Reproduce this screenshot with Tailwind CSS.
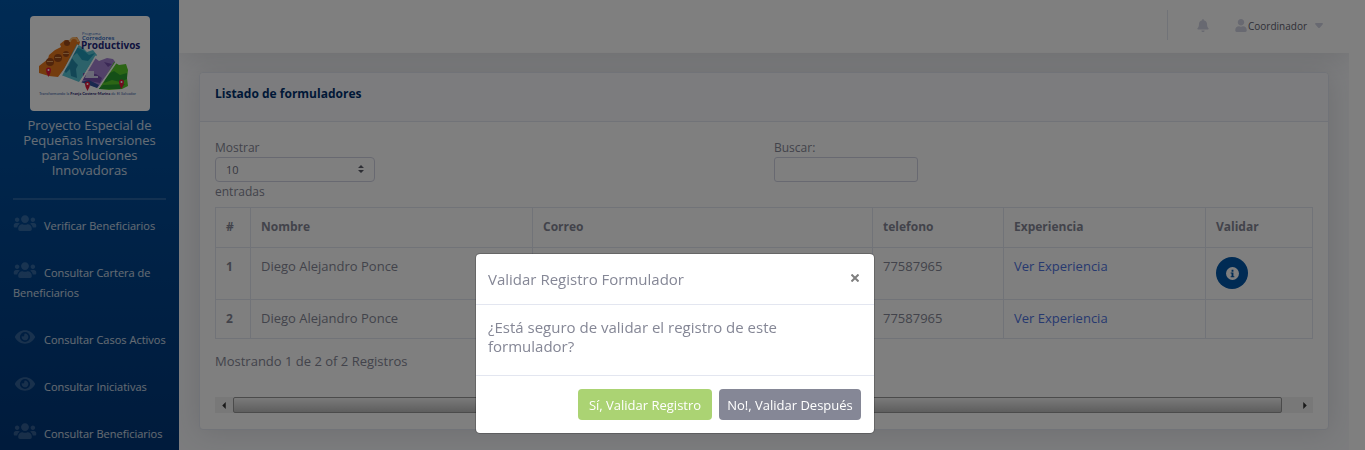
<!DOCTYPE html>
<html lang="es">
<head>
<meta charset="utf-8">
<meta name="viewport" content="width=device-width, initial-scale=1">
<title>Listado de formuladores</title>
<script src="https://cdn.jsdelivr.net/npm/@tailwindcss/browser@4"></script>
</head>
<body class="h-screen overflow-hidden bg-white pr-4 font-['Open_Sans','Noto_Sans',sans-serif] text-[12px] text-[#858796]">
<svg class="hidden">
  <symbol id="users" viewBox="0 0 640 512"><path d="M96 224c35.300 0 64-28.700 64-64s-28.700-64-64-64-64 28.700-64 64 28.700 64 64 64zm448 0c35.300 0 64-28.700 64-64s-28.700-64-64-64-64 28.700-64 64 28.700 64 64 64zm32 32h-64c-17.600 0-33.500 7.100-45.100 18.600 40.300 22.100 68.900 62 75.100 109.400h66c17.700 0 32-14.300 32-32v-32c0-35.300-28.700-64-64-64zm-256 0c61.900 0 112-50.100 112-112S381.900 32 320 32 208 82.100 208 144s50.100 112 112 112zm76.800 32h-8.300c-20.800 10-43.900 16-68.500 16s-47.600-6-68.500-16h-8.300C179.600 288 128 339.600 128 403.200V432c0 26.500 21.500 48 48 48h288c26.500 0 48-21.500 48-48v-28.800c0-63.600-51.600-115.200-115.200-115.200zm-223.700-13.400C161.500 263.100 145.600 256 128 256H64c-35.300 0-64 28.700-64 64v32c0 17.700 14.300 32 32 32h65.900c6.300-47.400 34.900-87.300 75.200-109.400z"/></symbol>
  <symbol id="eye" viewBox="0 0 576 512"><path d="M572.520 241.400C518.290 135.590 410.930 64 288 64S57.680 135.640 3.480 241.410a32.350 32.350 0 0 0 0 29.190C57.710 376.410 165.070 448 288 448s230.320-71.640 284.520-177.410a32.350 32.350 0 0 0 0-29.190zM288 400a144 144 0 1 1 144-144 143.930 143.930 0 0 1-144 144zm0-240a95.310 95.310 0 0 0-25.310 3.790 47.850 47.850 0 0 1-66.900 66.900A95.780 95.780 0 1 0 288 160z"/></symbol>
</svg>

<div class="flex h-full">
  <aside class="w-[179px] shrink-0 bg-linear-to-b from-[#0056a8] to-[#003678] px-[13px] pt-4 text-white/80">
    <div class="mx-auto w-[120px] rounded bg-white">
      <svg viewBox="0 0 120 95" class="block h-[95px] w-full" role="img" aria-label="Programa Corredores Productivos">
        <path fill="#e8781c" d="M9 50l9-7 1-4 6-5 6-3-1-3 5-4 5 1 3-3 4-1 3 5-3 10-19 25-9-1-10-3z"/>
        <path fill="#59c4d4" d="M47 28l5 3 5 5 6-2 4 5-18 27-18-7z"/>
        <path fill="#209bb8" d="M46 31l7 3 6 5 6-2-7 8-6-1-5-7-7 5z"/>
        <path fill="#278dad" d="M42 42l3 4 3 3-2 4 1 9-6-2-1-7-4 4-2-2 5-6z"/>
        <path fill="#a583d3" d="M65 42l4 3 8-3 6 1 3 4-18 25-17-6z"/>
        <path fill="#7651ad" d="M53 57l13 1 6 4-2 5-17-3zM74 46l8 2-4 3z"/>
        <path fill="#334f9d" d="M51 66l8-2 10 5-2 3z"/>
        <path fill="#d5d2ee" d="M57 55h7v5h4v2H55z"/>
        <path fill="#58cb2a" d="M84 46l5 3 7-1 2 6-1 8 1 8-6 3-13 1-10-1z"/>
        <path fill="#289e2f" d="M76 59l8-4 6 4 7-2v6l-7 3-8-2-8 3zM73 69l22-1-5 5H68z"/>
        <g fill="#a04a18"><circle cx="20" cy="46" r="4"/><circle cx="28" cy="42" r="4"/><circle cx="36" cy="38" r="3"/><circle cx="37" cy="27" r="3"/></g>
        <g fill="#e8a060"><path d="M17 45h6v1h-6zM25 41h6v1h-6zM33 37h6v1h-6z"/></g>
        <path stroke="#fff" stroke-width="1.500" d="M48 29L31 60M66 40L50 67M87 45L67 74"/>
        <path d="M40 26a4 4 0 0 1 8 0" stroke="#f6b56c" fill="none" stroke-width="2"/>
        <g fill="#e5163d"><path d="M16 54a2.500 2.500 0 0 1 5 0q0 3-2.500 7q-2.500-4-2.500-7zM55 68a2.500 2.500 0 0 1 5 0q0 3-2.500 7q-2.500-4-2.500-7zM89 66a2.500 2.500 0 0 1 5 0q0 3-2.500 7q-2.500-4-2.500-7z"/></g>
        <g fill="#fff"><circle cx="18.500" cy="54" r="1"/><circle cx="57.500" cy="68" r="1"/><circle cx="91.500" cy="66" r="1"/></g>
        <g font-family="Open Sans, sans-serif">
          <text x="52" y="19" font-size="4" fill="#2b62b5">Programa</text>
          <text x="52" y="24" font-size="6" font-weight="600" fill="#1d5fc0">Corredores</text>
          <text x="51" y="33" font-size="10" font-weight="700" fill="#23277d">Productivos</text>
          <text x="9" y="79" font-family="Lato, sans-serif" font-size="4" fill="#3b62a5">Transformando la <tspan font-weight="700" fill="#1d2170">Franja Costero-Marina</tspan> de El Salvador</text>
        </g>
      </svg>
    </div>
    <p class="mt-[7px] px-2 text-center text-[13px] leading-[15px]">Proyecto Especial de Pequeñas Inversiones para Soluciones Innovadoras</p>
    <hr class="mt-5 h-[2px] border-0 bg-white/15">
    <nav class="-mr-3 mt-[3px] text-[11px] leading-5">
      <a href="#" class="block pb-[14px] pt-[13px]"><svg class="-my-1 mr-[7px] inline-block h-[18px] w-6 fill-white/20 align-[2px]"><use href="#users"/></svg>Verificar Beneficiarios</a>
      <a href="#" class="block pb-[14px] pt-[13px]"><svg class="-my-1 mr-[7px] inline-block h-[18px] w-6 fill-white/20 align-[2px]"><use href="#users"/></svg>Consultar Cartera de<br>Beneficiarios</a>
      <a href="#" class="block pb-[14px] pt-[13px]"><svg class="-my-1 mr-[7px] inline-block h-[18px] w-6 fill-white/20 align-[2px]"><use href="#eye"/></svg>Consultar Casos Activos</a>
      <a href="#" class="block pb-[14px] pt-[13px]"><svg class="-my-1 mr-[7px] inline-block h-[18px] w-6 fill-white/20 align-[2px]"><use href="#eye"/></svg>Consultar Iniciativas</a>
      <a href="#" class="block pb-[14px] pt-[13px]"><svg class="-my-1 mr-[7px] inline-block h-[18px] w-6 fill-white/20 align-[2px]"><use href="#users"/></svg>Consultar Beneficiarios</a>
    </nav>
  </aside>

  <div class="flex min-w-0 flex-1 flex-col overflow-hidden bg-[#f8f9fc]">
    <header class="flex h-[53px] shrink-0 items-center justify-end bg-white pr-[26px] shadow-[0_2px_28px_rgba(58,59,69,0.15)]">
      <div class="mb-[3px] h-[30px] w-px bg-[#e3e6f0]"></div>
      <button type="button" aria-label="Notificaciones" class="mb-[2px] ml-[29px]"><svg viewBox="0 0 448 512" class="h-[13px] w-3 fill-[#d1d3e2]"><path d="M224 512c35.320 0 63.970-28.650 63.970-64H160.030c0 35.350 28.650 64 63.970 64zm215.390-149.710c-19.320-20.760-55.470-51.990-55.470-154.290 0-77.700-54.480-139.900-127.940-155.160V32c0-17.670-14.320-32-31.980-32s-31.980 14.330-31.980 32v20.840C118.560 68.100 64.080 130.300 64.080 208c0 102.300-36.150 133.530-55.470 154.290-6 6.450-8.660 14.160-8.610 21.710.11 16.400 12.980 32 32.100 32h383.800c19.120 0 32-15.600 32.100-32 .05-7.550-2.610-15.270-8.610-21.710z"/></svg></button>
      <button type="button" class="mb-[2px] ml-[26px] flex items-center text-[10px] leading-4 text-[#60616f]"><svg viewBox="0 0 448 512" class="mr-px h-[13px] w-3 fill-[#d1d3e2]"><path d="M224 256c70.700 0 128-57.300 128-128S294.700 0 224 0 96 57.300 96 128s57.300 128 128 128zm89.600 32h-16.700c-22.200 10.200-46.900 16-72.900 16s-50.600-5.800-72.900-16h-16.700C60.200 288 0 348.200 0 422.400V464c0 26.500 21.500 48 48 48h352c26.500 0 48-21.500 48-48v-41.600c0-74.200-60.200-134.400-134.400-134.400z"/></svg>Coordinador<svg viewBox="0 0 8 5" class="ml-2 h-[5px] w-2 fill-[#d1d3e2]"><path d="M0 1Q0 0 1 0h6q1 0 1 1L5 4.500q-1 1-2 0z"/></svg></button>
    </header>

    <main class="px-5 pt-[19px]">
      <section class="rounded border border-[#e3e6f0] bg-white shadow-[0_2px_28px_rgba(58,59,69,0.15)]">
        <div class="rounded-t border-b border-[#e3e6f0] bg-[#f8f9fc] px-[15px] pb-[17px] pt-[11px]">
          <h1 class="text-[12px] font-bold leading-5 text-[#00316f]">Listado de formuladores</h1>
        </div>
        <div class="px-[15px] pb-4 pt-4">
          <div class="flex leading-[19px]">
            <div class="w-[559px] shrink">
              <label for="cantidad" class="block">Mostrar</label>
              <div class="relative w-40">
                <select id="cantidad" class="block h-[25px] w-full appearance-none rounded border border-[#d1d3e2] bg-white px-[10px] text-[11px] text-[#6e707e]"><option>10</option></select>
                <svg viewBox="0 0 6 8" class="pointer-events-none absolute right-[11px] top-2 h-2 w-[6px] fill-[#5a5c69]"><path d="M3 0l3 3H0zM0 5h6L3 8z"/></svg>
              </div>
              <span class="block">entradas</span>
            </div>
            <div>
              <label for="buscar" class="block">Buscar:</label>
              <input id="buscar" type="search" class="block h-[25px] w-36 rounded-[3px] border border-[#d1d3e2] bg-white px-2">
            </div>
          </div>
          <table class="mt-[6px] w-full table-fixed border-collapse text-left leading-[18px] [&_td]:border [&_td]:border-[#e3e6f0] [&_td]:px-[10px] [&_td]:pb-[10px] [&_td]:pt-[9px] [&_td]:align-top [&_td]:text-[13px] [&_th]:border [&_th]:border-[#e3e6f0] [&_th]:px-[10px] [&_th]:pb-[9px] [&_th]:pt-[10px] [&_th]:align-top">
            <colgroup><col class="w-[35px]"><col class="w-[282px]"><col><col class="w-[131px]"><col class="w-[202px]"><col class="w-[107px]"></colgroup>
            <thead><tr class="h-10"><th scope="col">#</th><th scope="col">Nombre</th><th scope="col">Correo</th><th scope="col">telefono</th><th scope="col">Experiencia</th><th scope="col">Validar</th></tr></thead>
            <tbody>
              <tr class="h-[52px]"><th scope="row">1</th><td>Diego Alejandro Ponce</td><td></td><td>77587965</td><td><a href="#" class="text-[#4e73df]">Ver Experiencia</a></td>
                <td><button type="button" aria-label="Información" class="flex size-8 items-center justify-center rounded-full bg-[#0056a8]"><svg viewBox="0 0 14 14" class="size-[13px]"><circle cx="7" cy="7" r="7" fill="#fff"/><path fill="#0056a8" d="M6 3h2v2H6zM5 6h3v4h1v1H5v-1h1V7H5z"/></svg></button></td></tr>
              <tr class="h-[39px]"><th scope="row">2</th><td>Diego Alejandro Ponce</td><td></td><td>77587965</td><td><a href="#" class="text-[#4e73df]">Ver Experiencia</a></td><td></td></tr>
            </tbody>
          </table>
          <p class="mt-3 text-[13px] leading-5">Mostrando 1 de 2 of 2 Registros</p>
          <div class="mt-[26px] flex h-4 items-stretch bg-[#f0f0f0]">
            <div class="flex w-[18px] items-center justify-center"><svg viewBox="0 0 4 8" class="h-[7px] w-1 fill-[#333]"><path d="M4 0v8L0 4z"/></svg></div>
            <div class="flex-1 rounded-[2px] border border-[#979797] bg-linear-to-b from-[#f5f5f5] via-[#d8d8d8] to-[#bcbcbc]"></div>
            <div class="flex w-[31px] items-center justify-end pr-[6px]"><svg viewBox="0 0 4 8" class="h-[7px] w-1 fill-[#333]"><path d="M0 0v8l4-4z"/></svg></div>
          </div>
        </div>
      </section>
    </main>
  </div>
</div>

<div class="fixed inset-0 bg-black/50"></div>
<div class="fixed inset-0 flex items-start justify-center pr-[15px] pt-[253px]">
  <div role="dialog" aria-modal="true" aria-labelledby="titulo" class="w-[400px] rounded-[5px] border border-black/20 bg-white bg-clip-padding">
    <div class="flex items-start justify-between border-b border-[#e3e6f0] px-3 py-[15px]">
      <h2 id="titulo" class="text-[15px] leading-5">Validar Registro Formulador</h2>
      <button type="button" aria-label="Cerrar" class="mr-[3px] mt-[5px]"><svg viewBox="0 0 8 8" class="size-2 stroke-[#7f7f7f] stroke-2"><path d="M.5 .5l7 7M7.500 .5l-7 7"/></svg></button>
    </div>
    <div class="border-b border-[#e3e6f0] px-3 pb-[19px] pt-[13px]">
      <p class="text-[15px] leading-[19px]">¿Está seguro de validar el registro de este formulador?</p>
    </div>
    <div class="flex justify-end gap-[7px] px-[13px] py-[13px] text-[13px] leading-5 text-white">
      <button type="button" class="h-[31px] w-[134px] rounded bg-[#abd373]">Sí, Validar Registro</button>
      <button type="button" class="h-[31px] w-[142px] rounded bg-[#858796]">No!, Validar Después</button>
    </div>
  </div>
</div>
</body>
</html>
